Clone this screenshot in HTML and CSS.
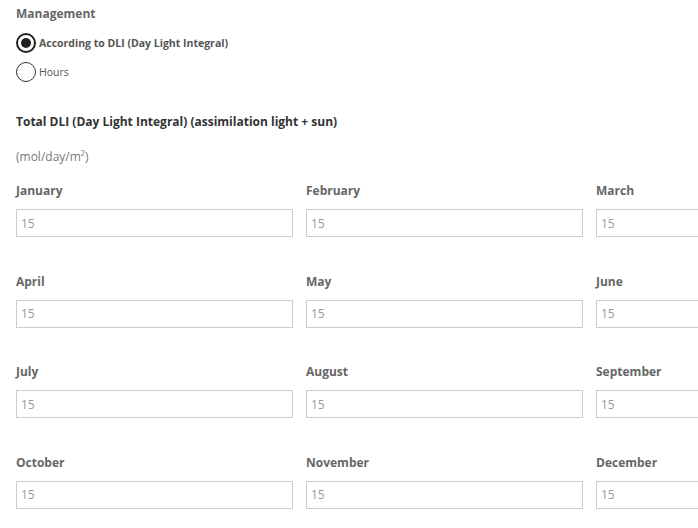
FILE: index.html
```html
<!DOCTYPE html>
<html lang="en">
<head>
    <meta charset="UTF-8">
    <meta name="viewport" content="width=device-width, initial-scale=1.0">
    <title>DLI Settings</title>
    <link rel="stylesheet" href="styles.css">
</head>
<body>
    <div class="container">
        <div class="section-title">Management</div>
        <div class="radio-group">
            <label class="radio-row">
                <span class="radio checked"></span>
                <span class="radio-label strong">According to DLI (Day Light Integral)</span>
            </label>
            <label class="radio-row">
                <span class="radio"></span>
                <span class="radio-label">Hours</span>
            </label>
        </div>

        <h3>Total DLI (Day Light Integral) (assimilation light + sun)</h3>
        <div class="unit">(mol/day/m²)</div>

        <!-- Month grid -->
        <div class="months">
            <div class="field"><label>January</label><input type="text" value="15"></div>
            <div class="field"><label>February</label><input type="text" value="15"></div>
            <div class="field"><label>March</label><input type="text" value="15"></div>
            <div class="field"><label>April</label><input type="text" value="15"></div>
            <div class="field"><label>May</label><input type="text" value="15"></div>
            <div class="field"><label>June</label><input type="text" value="15"></div>
            <div class="field"><label>July</label><input type="text" value="15"></div>
            <div class="field"><label>August</label><input type="text" value="15"></div>
            <div class="field"><label>September</label><input type="text" value="15"></div>
            <div class="field"><label>October</label><input type="text" value="15"></div>
            <div class="field"><label>November</label><input type="text" value="15"></div>
            <div class="field"><label>December</label><input type="text" value="15"></div>
        </div>
    </div>
</body>
</html>
```

FILE: styles.css
```css
body {
    font-family: "Open Sans", Arial, sans-serif;
    background-color: #ffffff;
    margin: 0;
    overflow: hidden;
}

.container {
    padding: 5px 0 0 16px;
}

.section-title {
    font-size: 12px;
    font-weight: bold;
    color: #666;
    line-height: 18px;
}

.radio-group {
    margin-top: 11px;
}

.radio-row {
    display: flex;
    align-items: center;
    height: 18px;
    margin-bottom: 11px;
}

.radio {
    box-sizing: border-box;
    width: 20px;
    height: 20px;
    border: 1px solid #333;
    border-radius: 50%;
    position: relative;
    margin-right: 3px;
    flex-shrink: 0;
}

    .radio.checked {
        border: 2px solid #222;
    }

        .radio.checked::after {
            content: "";
            position: absolute;
            left: 3px;
            top: 3px;
            width: 10px;
            height: 10px;
            border-radius: 50%;
            background-color: #222;
        }

.radio-label {
    font-size: 10.5px;
    color: #555;
}

    .radio-label.strong {
        font-weight: bold;
    }

h3 {
    font-size: 12px;
    font-weight: bold;
    color: #333;
    margin: 32px 0 0 0;
    line-height: 18px;
}

.unit {
    font-size: 12px;
    color: #777;
    line-height: 18px;
    margin-top: 17px;
}

.months {
    display: grid;
    grid-template-columns: repeat(3, 277px);
    column-gap: 13px;
    row-gap: 35.6px;
    margin-top: 16px;
}

.field label {
    display: block;
    font-size: 12px;
    font-weight: bold;
    color: #666;
    line-height: 18px;
    margin-bottom: 9px;
}

.field input {
    display: block;
    box-sizing: border-box;
    width: 100%;
    height: 28px;
    border: 1px solid #ccc;
    padding: 0 4px;
    font-family: "Open Sans", Arial, sans-serif;
    font-size: 12px;
    color: #999;
}
```
